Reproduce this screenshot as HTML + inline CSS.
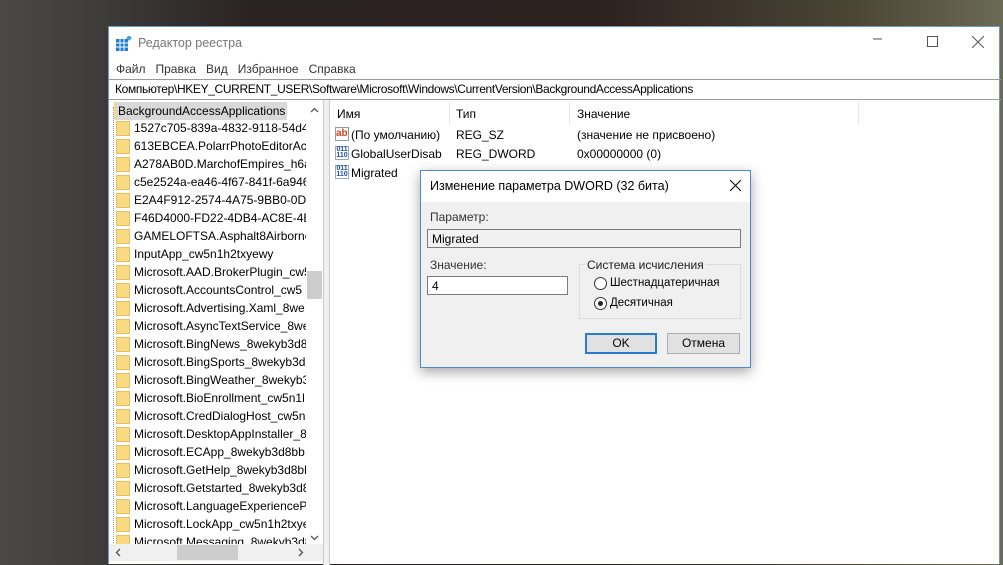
<!DOCTYPE html>
<html><head><meta charset="utf-8"><style>
*{margin:0;padding:0;box-sizing:border-box}
body{width:1003px;height:564px;overflow:hidden;position:relative;font-family:"Liberation Sans",sans-serif;font-size:12px;color:#000;
background:linear-gradient(90deg,#4a4948 0,#3d3c3b 100px,#2a2322 250px,#2c2220 600px,#4a4535 850px,#6b6a55 1003px)}
.a{position:absolute;white-space:nowrap}
.win{position:absolute;left:108px;top:26px;width:892px;height:538px;background:#fff;border:1px solid #6a9bc8;border-bottom:none}
.fold{position:absolute;width:14px;height:15px;background:#f8da82;border:1px solid #e6c060}
.tree .a{font-size:12px}
.dlg{position:absolute;left:420px;top:170px;width:331px;height:198px;background:#f0f0f0;border:1px solid #4a8ccf;box-shadow:0 4px 12px rgba(0,0,0,.35)}
.inp{position:absolute;border:1px solid #7a7a7a;background:#fff;padding:2px 4px;font-size:12px}
.btn{position:absolute;border:1px solid #adadad;background:#e1e1e1;text-align:center;line-height:18px}
.rad{position:absolute;width:13px;height:13px;border:1px solid #333;border-radius:50%;background:#fff}
</style></head><body>
<div class="win">
 <svg class="a" style="left:7px;top:9px" width="16" height="16"><rect x="0" y="3" width="12" height="12" fill="#1e7fd0"/><path d="M0 7h12M0 11h12M4 3v12M8 3v12" stroke="#fff" stroke-width="1"/><rect x="11" y="0" width="4" height="4" fill="#3aa0e8" transform="rotate(45 13 2)"/></svg>
 <div class="a" style="left:29px;top:9px;color:#777;font-size:12.5px">Редактор реестра</div>
 <div class="a" style="left:764px;top:3px;color:#555;font-size:16px">–</div>
 <div class="a" style="left:818px;top:9px;width:11px;height:11px;border:1px solid #555"></div>
 <svg class="a" style="left:863px;top:9px" width="12" height="12"><path d="M0 0L12 12M12 0L0 12" stroke="#555" stroke-width="1"/></svg>
 <div class="a" style="left:7px;top:35px;color:#333">Файл&nbsp;&nbsp;&nbsp;Правка&nbsp;&nbsp;&nbsp;Вид&nbsp;&nbsp;&nbsp;Избранное&nbsp;&nbsp;&nbsp;Справка</div>
 <div class="a" style="left:0;top:52px;width:892px;height:21px;border:1px solid #999;border-left:none;border-right:none"></div>
 <div class="a" style="left:6px;top:55px;font-size:12px;letter-spacing:-0.35px">Компьютер\HKEY_CURRENT_USER\Software\Microsoft\Windows\CurrentVersion\BackgroundAccessApplications</div>
 <div class="a" style="left:0;top:73px;width:215px;height:465px;border-right:1px solid #ccc"></div>
 <div class="a" style="left:4px;top:80px;width:1px;height:440px;border-left:1px dotted #999"></div>
 <div class="a" style="left:5px;top:75px;width:173px;height:18px;background:#d9d9d9"></div>
 <div class="a" style="left:5px;top:76px;width:2px;height:16px;background:#f5d77f"></div>
 <div class="a" style="left:9px;top:77px">BackgroundAccessApplications</div>
 <div class="tree">
 <div class="fold" style="left:7px;top:94px"></div><div class="a" style="left:25px;top:94px">1527c705-839a-4832-9118-54d4B</div>
 <div class="fold" style="left:7px;top:112px"></div><div class="a" style="left:25px;top:112px">613EBCEA.PolarrPhotoEditorAca</div>
 <div class="fold" style="left:7px;top:130px"></div><div class="a" style="left:25px;top:130px">A278AB0D.MarchofEmpires_h6ac</div>
 <div class="fold" style="left:7px;top:148px"></div><div class="a" style="left:25px;top:148px">c5e2524a-ea46-4f67-841f-6a9465</div>
 <div class="fold" style="left:7px;top:166px"></div><div class="a" style="left:25px;top:166px">E2A4F912-2574-4A75-9BB0-0D02</div>
 <div class="fold" style="left:7px;top:184px"></div><div class="a" style="left:25px;top:184px">F46D4000-FD22-4DB4-AC8E-4E1I</div>
 <div class="fold" style="left:7px;top:202px"></div><div class="a" style="left:25px;top:202px">GAMELOFTSA.Asphalt8Airborne_</div>
 <div class="fold" style="left:7px;top:220px"></div><div class="a" style="left:25px;top:220px">InputApp_cw5n1h2txyewy</div>
 <div class="fold" style="left:7px;top:238px"></div><div class="a" style="left:25px;top:238px">Microsoft.AAD.BrokerPlugin_cw5</div>
 <div class="fold" style="left:7px;top:256px"></div><div class="a" style="left:25px;top:256px">Microsoft.AccountsControl_cw5</div>
 <div class="fold" style="left:7px;top:274px"></div><div class="a" style="left:25px;top:274px">Microsoft.Advertising.Xaml_8we</div>
 <div class="fold" style="left:7px;top:292px"></div><div class="a" style="left:25px;top:292px">Microsoft.AsyncTextService_8we</div>
 <div class="fold" style="left:7px;top:310px"></div><div class="a" style="left:25px;top:310px">Microsoft.BingNews_8wekyb3d8</div>
 <div class="fold" style="left:7px;top:328px"></div><div class="a" style="left:25px;top:328px">Microsoft.BingSports_8wekyb3d</div>
 <div class="fold" style="left:7px;top:346px"></div><div class="a" style="left:25px;top:346px">Microsoft.BingWeather_8wekyb3</div>
 <div class="fold" style="left:7px;top:364px"></div><div class="a" style="left:25px;top:364px">Microsoft.BioEnrollment_cw5n1l</div>
 <div class="fold" style="left:7px;top:382px"></div><div class="a" style="left:25px;top:382px">Microsoft.CredDialogHost_cw5n</div>
 <div class="fold" style="left:7px;top:400px"></div><div class="a" style="left:25px;top:400px">Microsoft.DesktopAppInstaller_8</div>
 <div class="fold" style="left:7px;top:418px"></div><div class="a" style="left:25px;top:418px">Microsoft.ECApp_8wekyb3d8bb</div>
 <div class="fold" style="left:7px;top:436px"></div><div class="a" style="left:25px;top:436px">Microsoft.GetHelp_8wekyb3d8bl</div>
 <div class="fold" style="left:7px;top:454px"></div><div class="a" style="left:25px;top:454px">Microsoft.Getstarted_8wekyb3d8</div>
 <div class="fold" style="left:7px;top:472px"></div><div class="a" style="left:25px;top:472px">Microsoft.LanguageExperiencePa</div>
 <div class="fold" style="left:7px;top:490px"></div><div class="a" style="left:25px;top:490px">Microsoft.LockApp_cw5n1h2txye</div>
 <div class="fold" style="left:7px;top:508px"></div><div class="a" style="left:25px;top:508px">Microsoft.Messaging_8wekyb3d8</div>
 </div>
 <div class="a" style="left:197px;top:73px;width:17px;height:444px;background:#fff"></div>
 <svg class="a" style="left:201px;top:80px" width="9" height="6"><path d="M1 5L4.5 1.5L8 5" stroke="#555" fill="none" stroke-width="1.3"/></svg>
 <div class="a" style="left:198px;top:244px;width:15px;height:28px;background:#cdcdcd"></div>
 <svg class="a" style="left:201px;top:508px" width="9" height="6"><path d="M1 1L4.5 4.5L8 1" stroke="#555" fill="none" stroke-width="1.3"/></svg>
 <div class="a" style="left:0;top:517px;width:214px;height:17px;background:#f0f0f0"></div>
 <svg class="a" style="left:6px;top:521px" width="6" height="9"><path d="M5 1L1.5 4.5L5 8" stroke="#555" fill="none" stroke-width="1.3"/></svg>
 <div class="a" style="left:68px;top:518px;width:61px;height:15px;background:#cdcdcd"></div>
 <svg class="a" style="left:189px;top:521px" width="6" height="9"><path d="M1 1L4.5 4.5L1 8" stroke="#555" fill="none" stroke-width="1.3"/></svg>
 <div class="a" style="left:215px;top:73px;width:6px;height:465px;background:#f0f0f0;border-right:1px solid #ccc"></div>
 <div class="a" style="left:340px;top:75px;width:1px;height:22px;background:#e5e5e5"></div>
 <div class="a" style="left:460px;top:75px;width:1px;height:22px;background:#e5e5e5"></div>
 <div class="a" style="left:749px;top:75px;width:1px;height:22px;background:#e5e5e5"></div>
 <div class="a" style="left:228px;top:80px">Имя</div>
 <div class="a" style="left:347px;top:80px">Тип</div>
 <div class="a" style="left:468px;top:80px">Значение</div>
 <div class="a" style="left:226px;top:100px;width:14px;height:14px;border:1px solid #999;color:#d4401c;font-weight:bold;font-size:10px;line-height:11px;background:#fff">ab</div>
 <div class="a" style="left:242px;top:101px">(По умолчанию)</div>
 <div class="a" style="left:347px;top:101px">REG_SZ</div>
 <div class="a" style="left:468px;top:101px">(значение не присвоено)</div>
 <div class="a" style="left:226px;top:119px;width:14px;height:14px;border:1px solid #9ab;color:#1a4e9e;font-size:7px;line-height:6px;font-weight:bold;text-align:center;background:#fff">011<br>110</div>
 <div class="a" style="left:242px;top:120px">GlobalUserDisab</div>
 <div class="a" style="left:347px;top:120px">REG_DWORD</div>
 <div class="a" style="left:468px;top:120px">0x00000000 (0)</div>
 <div class="a" style="left:226px;top:138px;width:14px;height:14px;border:1px solid #9ab;color:#1a4e9e;font-size:7px;line-height:6px;font-weight:bold;text-align:center;background:#fff">011<br>110</div>
 <div class="a" style="left:242px;top:139px">Migrated</div>
</div>
<div class="dlg">
 <div class="a" style="left:0;top:0;width:329px;height:31px;background:#fff"></div>
 <div class="a" style="left:9px;top:8px;font-size:12.5px">Изменение параметра DWORD (32 бита)</div>
 <svg class="a" style="left:309px;top:9px" width="11" height="11"><path d="M0 0L11 11M11 0L0 11" stroke="#222" stroke-width="1.2"/></svg>
 <div class="a" style="left:9px;top:39px;color:#333">Параметр:</div>
 <div class="inp" style="left:6px;top:58px;width:314px;height:19px;background:#f0f0f0">Migrated</div>
 <div class="a" style="left:9px;top:87px;color:#333">Значение:</div>
 <div class="inp" style="left:6px;top:105px;width:141px;height:19px">4</div>
 <div class="a" style="left:158px;top:93px;width:162px;height:55px;border:1px solid #dcdcdc"></div>
 <div class="a" style="left:164px;top:87px;background:#f0f0f0;padding:0 2px;color:#222">Система исчисления</div>
 <div class="rad" style="left:173px;top:106px"></div>
 <div class="a" style="left:189px;top:106px;font-size:11.5px">Шестнадцатеричная</div>
 <div class="rad" style="left:173px;top:126px"><div style="position:absolute;left:3px;top:3px;width:5px;height:5px;border-radius:50%;background:#222"></div></div>
 <div class="a" style="left:189px;top:126px;font-size:11.5px">Десятичная</div>
 <div class="btn" style="left:164px;top:162px;width:72px;height:21px;border:2px solid #2b7ad0;line-height:17px">OK</div>
 <div class="btn" style="left:246px;top:162px;width:73px;height:21px">Отмена</div>
</div>
</body></html>
